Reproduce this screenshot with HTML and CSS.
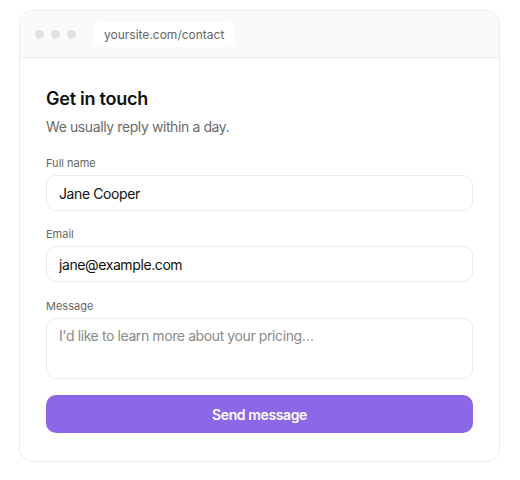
FILE: index.html
```html
<!DOCTYPE html>
<html lang="en">
<head>
  <meta charset="UTF-8">
  <title>Contact</title>
  <link rel="stylesheet" href="styles.css">
</head>
<body>

<div class="window">
  <!-- Browser chrome -->
  <div class="titlebar">
    <span class="dot"></span>
    <span class="dot"></span>
    <span class="dot"></span>
    <span class="url">yoursite.com/contact</span>
  </div>

  <form class="contact">
    <h1>Get in touch</h1>
    <p class="lead">We usually reply within a day.</p>

    <label for="name">Full name</label>
    <input type="text" id="name" value="Jane Cooper">

    <label for="email">Email</label>
    <input type="email" id="email" value="jane@example.com">

    <label for="msg" class="msg-label">Message</label>
    <textarea id="msg" placeholder="I'd like to learn more about your pricing…"></textarea>

    <button type="button">Send message</button>
  </form>
</div>

</body>
</html>
```

FILE: styles.css
```css
* { box-sizing: border-box; }
body { margin: 0; background: #fff; font-family: Inter, "Noto Sans", sans-serif; color: #111; }
.window { width: 481px; margin: 10px 0 0 19px; border: 1px solid #ececec; border-radius: 14px; overflow: hidden; background: #fff; }
.titlebar { height: 47px; background: #fafafa; border-bottom: 1px solid #ececec; display: flex; align-items: center; padding-left: 15px; gap: 7px; }
.dot { width: 9px; height: 9px; border-radius: 50%; background: #e1e1e1; }
.url { margin-left: 10px; background: #fff; border-radius: 8px; padding: 5px 11px; font-size: 12px; color: #666; }
.contact { display: flex; flex-direction: column; padding: 29px 26px 28px 26px; }
h1 { margin: 0; font-size: 18px; line-height: 24px; font-weight: 600; letter-spacing: -0.25px; }
.lead { margin: 6px 0 0; font-size: 14px; line-height: 20px; color: #6b6b6b; letter-spacing: -0.4px; }
label { font-size: 11px; line-height: 14px; color: #666; margin-top: 16px; margin-bottom: 5px; }
.lead + label { margin-top: 19px; }
.msg-label { margin-top: 17px; }
input, textarea { font-family: inherit; font-size: 14px; color: #111; border: 1px solid #ebebeb; border-radius: 10px; padding: 0 12px; background: #fff; outline: none; letter-spacing: -0.4px; }
input { height: 36px; }
textarea { height: 61px; padding-top: 8px; resize: none; line-height: 18px; }
textarea::placeholder { color: #8a8a8a; }
button { margin-top: 16px; height: 38px; border: none; border-radius: 10px; background: #8d68e6; color: #fff; font-family: inherit; font-size: 14px; font-weight: 600; letter-spacing: -0.4px; }
```
